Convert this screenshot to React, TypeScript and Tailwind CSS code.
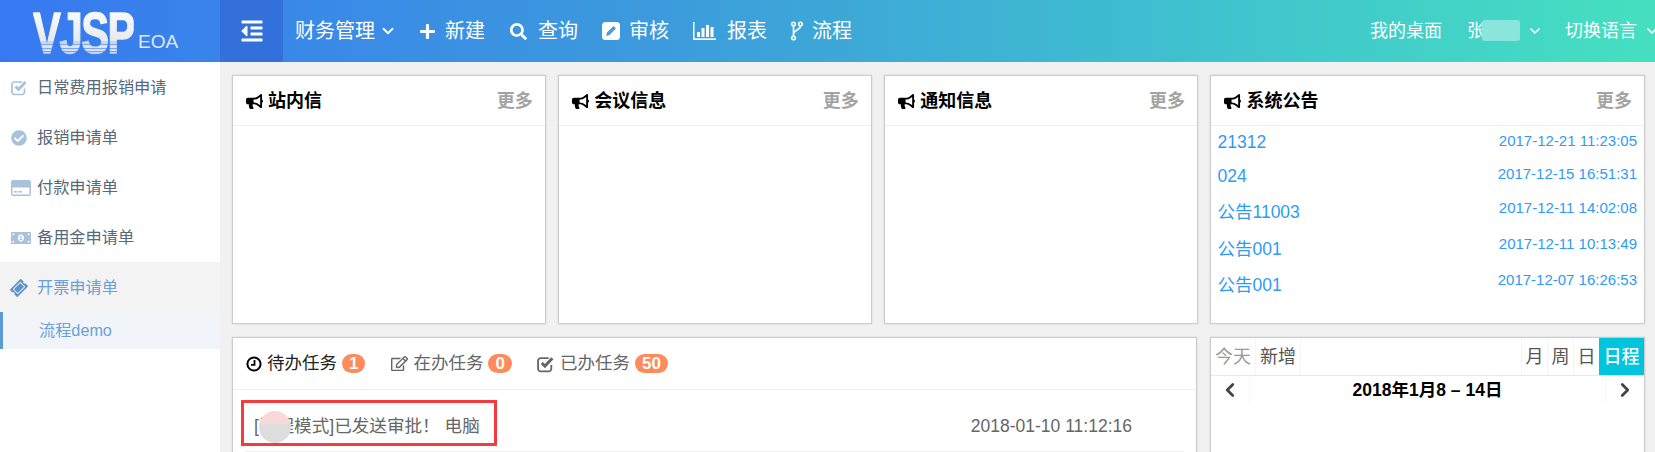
import React from "react";
import {
  FaBullhorn, FaCheckCircle, FaMoneyBillAlt, FaTicketAlt,
  FaPlus, FaSearch, FaOutdent, FaRegEdit,
} from "react-icons/fa";
import { ChevronDown, ChevronLeft, ChevronRight } from "lucide-react";

const font = "font-['Liberation_Sans','Noto_Sans_CJK_SC',sans-serif]";

function ChartIcon() {
  return (
    <svg width="23" height="18" viewBox="0 0 23 18" fill="white">
      <rect x="0" y="0" width="1.5" height="18" />
      <rect x="0" y="16.3" width="23" height="1.7" />
      <rect x="4" y="10" width="3" height="5" />
      <rect x="8.5" y="6" width="3" height="9" />
      <rect x="13" y="3" width="3" height="12" />
      <rect x="17.5" y="5" width="3" height="10" />
    </svg>
  );
}

function BranchIcon() {
  return (
    <svg width="12" height="20" viewBox="0 0 12 20" fill="none" stroke="white" strokeWidth="1.6">
      <circle cx="2.5" cy="3" r="1.8" />
      <circle cx="2.5" cy="17" r="1.8" />
      <circle cx="9.5" cy="3" r="1.8" />
      <path d="M2.5 5v10M9.5 5c0 4-7 4-7 8" />
    </svg>
  );
}

function PenBox() {
  return (
    <svg width="18" height="18" viewBox="0 0 18 18">
      <rect x="0" y="0" width="18" height="18" rx="3.5" fill="white" />
      <path d="M4 14l1-3.5 6.5-6.5 2.5 2.5-6.5 6.5z" fill="#4a9be0" />
    </svg>
  );
}

function CheckBox({ size = 17 }: { size?: number }) {
  return (
    <svg width={size} height={size} viewBox="0 0 17 17" fill="none" stroke="currentColor">
      <path d="M13.5 9.5v3.5a2.5 2.5 0 0 1-2.5 2.5H3.5A2.5 2.5 0 0 1 1 13V5.5A2.5 2.5 0 0 1 3.5 3H11" strokeWidth="1.7" />
      <path d="M4.5 7.5l3 3 7-7.5" strokeWidth="2.8" />
    </svg>
  );
}

function CardIcon() {
  return (
    <svg width="20" height="16" viewBox="0 0 20 16" fill="currentColor">
      <path fillRule="evenodd" d="M2 0h16a2 2 0 0 1 2 2v12a2 2 0 0 1-2 2H2a2 2 0 0 1-2-2V2a2 2 0 0 1 2-2zM1.5 7.5V14a.5.5 0 0 0 .5.5h16a.5.5 0 0 0 .5-.5V7.5z" />
      <rect x="3" y="11" width="3" height="1.5" />
      <rect x="7" y="11" width="4" height="1.5" />
    </svg>
  );
}

function ClockIcon() {
  return (
    <svg width="16" height="16" viewBox="0 0 16 16" fill="none" stroke="black">
      <circle cx="8" cy="8" r="6.6" strokeWidth="2" />
      <path d="M8.5 4v4.8H5" strokeWidth="1.8" />
    </svg>
  );
}

function Header() {
  return (
    <header className="h-[62px] shrink-0 flex items-center text-white bg-[linear-gradient(90deg,#3779f1_0%,#3c9bdc_40%,#3fbfd0_70%,#45e0c0_100%)]">
      <div className="w-[220px] h-full shrink-0 relative flex items-end">
        <span className="block ml-[33px] mb-[0px] font-bold text-[58px] leading-[58px] origin-left scale-x-[0.72] tracking-[-2px] text-transparent [-webkit-text-stroke:1.5px_transparent] bg-clip-text bg-[linear-gradient(180deg,#ffffff_0px,#e6e9f0_37px,#cbd6ea_37px,#cbd6ea_40px,#7ea6ee_40px,#7ea6ee_41px,#dce4f2_41px,#dce4f2_44px,#7ea6ee_44px,#7ea6ee_45px,#d5dff0_45px,#d5dff0_47px,#7ea6ee_47px,#7ea6ee_48px,#c8d4ec_48px,#c8d4ec_50px,#7ea6ee_50px,#7ea6ee_51px,#c0cfea_51px,#c0cfea_58px)]">
          VJSP
        </span>
        <span className="absolute left-[138px] top-[31px] text-[19px] leading-[22px] text-[#dfe9f8]">EOA</span>
      </div>
      <div className="w-[63px] h-full shrink-0 bg-[#3470da] flex items-center justify-center">
        <FaOutdent size={24} />
      </div>
      <div className="flex items-center text-[20px] leading-[28px]">
        <span className="ml-[12px]">财务管理</span>
        <ChevronDown size={18} strokeWidth={2.5} className="ml-[4px]" />
        <FaPlus size={17} className="ml-[22px]" />
        <span className="ml-[9px]">新建</span>
        <FaSearch size={17} className="ml-[25px]" />
        <span className="ml-[11px]">查询</span>
        <span className="ml-[24px] flex"><PenBox /></span>
        <span className="ml-[9px]">审核</span>
        <span className="ml-[24px] flex"><ChartIcon /></span>
        <span className="ml-[11px]">报表</span>
        <span className="ml-[24px] flex"><BranchIcon /></span>
        <span className="ml-[9px]">流程</span>
      </div>
      <div className="ml-auto flex items-center text-[18px] leading-[28px] shrink-0">
        <span>我的桌面</span>
        <span className="ml-[25px] relative w-[60px]">
          张
          <span className="absolute left-[15px] top-[3px] w-[38px] h-[21px] rounded-[3px] bg-[#8ae6dc]" />
        </span>
        <ChevronDown size={16} strokeWidth={2.5} />
        <span className="ml-[22px]">切换语言</span>
        <ChevronDown size={16} strokeWidth={2.5} className="ml-[7px] mr-[-5px]" />
      </div>
    </header>
  );
}

const menu = [
  { icon: <CheckBox size={17} />, label: "日常费用报销申请" },
  { icon: <FaCheckCircle size={16} />, label: "报销申请单" },
  { icon: <CardIcon />, label: "付款申请单" },
  { icon: <FaMoneyBillAlt size={20} />, label: "备用金申请单" },
];

function Sidebar() {
  return (
    <aside className="w-[220px] shrink-0 bg-white text-[16.2px]">
      {menu.map((m) => (
        <div key={m.label} className="h-[50px] flex items-center pt-[1px] text-[#56687a]">
          <span className="w-[37px] pl-[11px] shrink-0 text-[#a9c2db] flex">{m.icon}</span>
          <span>{m.label}</span>
        </div>
      ))}
      <div className="h-[50px] flex items-center pt-[1px] bg-[#f3f3f3] text-[#6a9fd8]">
        <span className="w-[37px] pl-[11px] shrink-0 text-[#5b94d0] flex"><FaTicketAlt size={16} className="-rotate-45" /></span>
        <span>开票申请单</span>
      </div>
      <div className="h-[37px] flex items-center bg-[#f1f5f9] border-l-[3px] border-[#5b9bd5] pl-[36px] text-[#6a9fd8]">
        流程demo
      </div>
    </aside>
  );
}

function Panel({ title, children, className }: { title: string; children?: React.ReactNode; className: string }) {
  return (
    <section className={`h-[249px] bg-white border border-[#cccccc] shadow-[0_0_2px_rgba(0,0,0,0.12)] ${className}`}>
      <div className="h-[50px] flex items-center justify-between border-b border-[#eeeeee] pl-[13px] pr-[12px] pt-[1px]">
        <div className="flex items-center font-bold text-[18px] text-black">
          <FaBullhorn size={17} className="mr-[5px]" />
          {title}
        </div>
        <span className="font-bold text-[18px] text-[#a3a3a3]">更多</span>
      </div>
      {children}
    </section>
  );
}

const notices = [
  { t: "21312", d: "2017-12-21 11:23:05", h: "h-[33px]", l: "leading-[32px]" },
  { t: "024", d: "2017-12-15 16:51:31", h: "h-[34px]", l: "leading-[34px]" },
  { t: "公告11003", d: "2017-12-11 14:02:08", h: "h-[36px]", l: "leading-[38px]" },
  { t: "公告001", d: "2017-12-11 10:13:49", h: "h-[36px]", l: "leading-[40px]" },
  { t: "公告001", d: "2017-12-07 16:26:53", h: "h-[36px]", l: "leading-[40px]" },
];

function Tab({ icon, label, count, className }: { icon: React.ReactNode; label: string; count: string; className: string }) {
  return (
    <div className={`flex items-center ${className}`}>
      <span className="mr-[5px] flex">{icon}</span>
      <span className="text-[17.5px]">{label}</span>
      <span className="ml-[5px] h-[19px] px-[7px] rounded-full bg-[#ff8a5b] text-white font-bold text-[17px] leading-[19px]">{count}</span>
    </div>
  );
}

function Tasks() {
  return (
    <section className="h-[140px] bg-white border border-[#cccccc] shadow-[0_0_2px_rgba(0,0,0,0.12)]">
      <div className="h-[52px] flex items-center pl-[13px] border-b border-[#eeeeee]">
        <Tab className="text-[#222222] mr-[26px]" icon={<ClockIcon />} label="待办任务" count="1" />
        <Tab className="text-[#666666] mr-[25px]" icon={<FaRegEdit size={17} />} label="在办任务" count="0" />
        <Tab className="text-[#666666]" icon={<CheckBox size={18} />} label="已办任务" count="50" />
      </div>
      <div className="relative h-[62px] mx-[12px] border-b border-[#eeeeee] flex items-center justify-between text-[#666666] pt-[12px]">
        <span className="ml-[9px] text-[17.6px]">[流程模式]已发送审批！ 电脑</span>
        <span className="mr-[52px] text-[17.5px]">2018-01-10 11:12:16</span>
        <span className="absolute left-[14px] top-[21px] w-[32px] h-[32px] rounded-full bg-[linear-gradient(180deg,#f8d8d9_0%,#f8d8d9_40%,#dddddd_40%,#dddddd_100%)]" />
        <span className="absolute left-[-4px] top-[10px] w-[256px] h-[46px] border-[3px] border-[#f63a3e]" />
      </div>
    </section>
  );
}

function Calendar() {
  return (
    <section className="flex-1 h-[140px] bg-white border border-[#cccccc] shadow-[0_0_2px_rgba(0,0,0,0.12)]">
      <div className="h-[38px] flex items-stretch border-b border-[#e8e8e8] text-[18px] leading-[38px]">
        <span className="w-[45px] text-center text-[#999999] border-r border-[#f6f6f6]">今天</span>
        <span className="w-[45px] text-center text-[#555555] border-r border-[#f6f6f6]">新增</span>
        <span className="w-[26px] text-center text-[#555555] ml-auto border-l border-[#f6f6f6]">月</span>
        <span className="w-[26px] text-center text-[#555555] border-l border-[#f6f6f6]">周</span>
        <span className="w-[26px] text-center text-[#555555] border-l border-[#f6f6f6]">日</span>
        <span className="w-[45px] text-center font-medium text-white bg-[#00c5dc]">日程</span>
      </div>
      <div className="h-[28px] flex items-stretch">
        <span className="w-[39px] flex items-center justify-center border-r border-[#f8f8f8] text-[#444444]"><ChevronLeft size={22} strokeWidth={3} /></span>
        <span className="flex-1 text-center font-bold text-[17.5px] leading-[28px] text-black">2018年1月8 – 14日</span>
        <span className="w-[39px] flex items-center justify-center border-l border-[#f8f8f8] text-[#444444]"><ChevronRight size={22} strokeWidth={3} /></span>
      </div>
    </section>
  );
}

export default function App() {
  return (
    <div className={`h-[452px] overflow-hidden flex flex-col bg-[#f1f1f1] ${font}`}>
      <Header />
      <div className="flex flex-1 min-h-0">
        <Sidebar />
        <main className="flex-1 pl-[12px] pr-[10px] pt-[13px] flex flex-col gap-[13px]">
          <div className="flex gap-[12.5px]">
            <Panel title="站内信" className="w-[313.67px]" />
            <Panel title="会议信息" className="w-[313.67px]" />
            <Panel title="通知信息" className="w-[313.67px]" />
            <Panel title="系统公告" className="flex-1">
              <div className="pl-[6px] pr-[7px] text-[#2f9bf5]">
                {notices.map((n, i) => (
                  <div key={i} className={`flex justify-between items-start ${n.h}`}>
                    <span className={`text-[17.5px] ${n.l}`}>{n.t}</span>
                    <span className="text-[15px] leading-[30px]">{n.d}</span>
                  </div>
                ))}
              </div>
            </Panel>
          </div>
          <div className="flex gap-[13px]">
            <div className="w-[965px] shrink-0"><Tasks /></div>
            <Calendar />
          </div>
        </main>
      </div>
    </div>
  );
}
